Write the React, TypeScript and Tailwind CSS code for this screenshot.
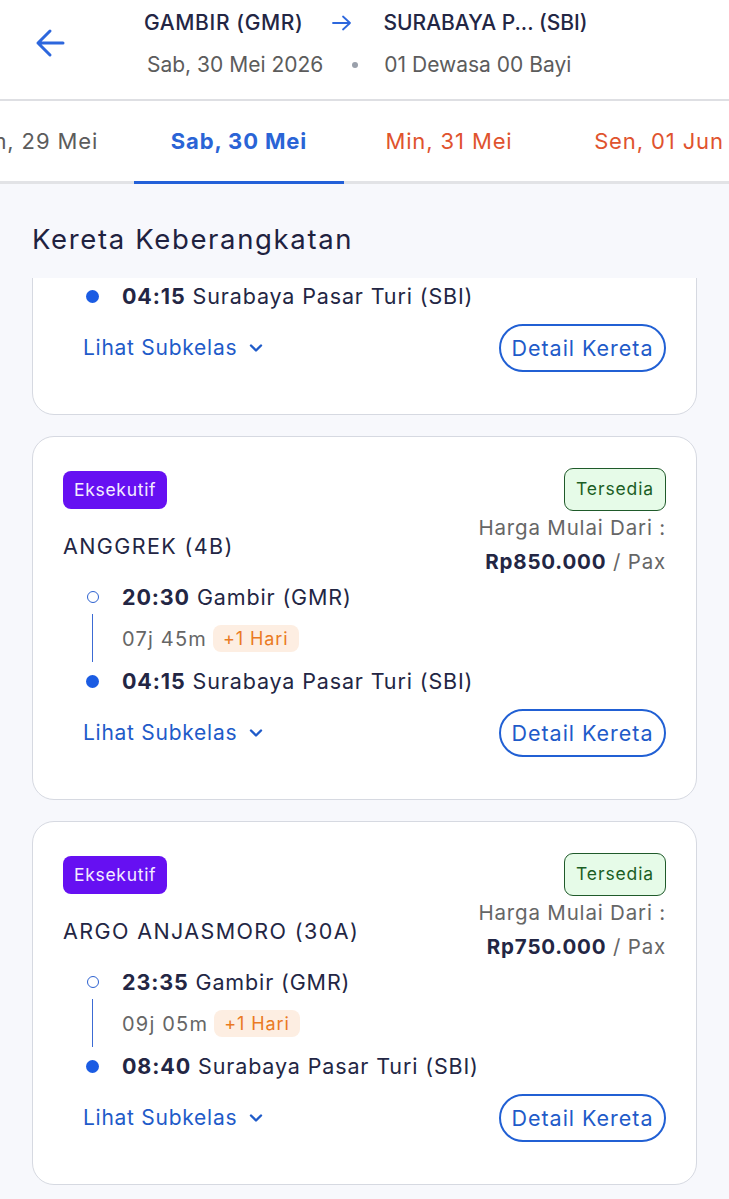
import React from "react";

interface Train {
  id: number;
  name: string;
  price: string;
  depTime: string;
  depStation: string;
  duration: string;
  arrTime: string;
  arrStation: string;
}

const trains: Train[] = [
  {
    id: 1,
    name: "ARGO BROMO ANGGREK (2)",
    price: "Rp900.000",
    depTime: "20:30",
    depStation: "Gambir (GMR)",
    duration: "07j 45m",
    arrTime: "04:15",
    arrStation: "Surabaya Pasar Turi (SBI)",
  },
  {
    id: 2,
    name: "ANGGREK (4B)",
    price: "Rp850.000",
    depTime: "20:30",
    depStation: "Gambir (GMR)",
    duration: "07j 45m",
    arrTime: "04:15",
    arrStation: "Surabaya Pasar Turi (SBI)",
  },
  {
    id: 3,
    name: "ARGO ANJASMORO (30A)",
    price: "Rp750.000",
    depTime: "23:35",
    depStation: "Gambir (GMR)",
    duration: "09j 05m",
    arrTime: "08:40",
    arrStation: "Surabaya Pasar Turi (SBI)",
  },
];

const tabs = [
  { label: "Jum, 29 Mei", tone: "gray" },
  { label: "Sab, 30 Mei", tone: "active" },
  { label: "Min, 31 Mei", tone: "red" },
  { label: "Sen, 01 Jun", tone: "red" },
];

const TrainCard: React.FC<{ train: Train; className?: string }> = ({ train, className }) => {
  return (
    <div
      className={`bg-white border-[1.5px] border-[#d6d9e1] rounded-[22px] pt-[31px] pb-[42px] px-[30px] ${className ?? ""}`}
    >
      <div className="flex justify-between items-start">
        <div className="flex flex-col items-start">
          <span className="mt-[3px] h-[38px] px-[11px] rounded-[8px] bg-[#6610f2] text-[#f4ecff] text-[17.5px] tracking-[0.04em] flex items-center">
            Eksekutif
          </span>
          <span className="mt-[22px] text-[21.5px] leading-[30px] text-[#232644] tracking-[0.065em]">
            {train.name}
          </span>
        </div>
        <div className="flex flex-col items-end">
          <span className="h-[43px] px-[11px] rounded-[9px] border-[1.5px] border-[#1f5a2a] bg-[#e6fbe8] text-[#1b5e24] text-[17.5px] tracking-[0.05em] flex items-center">
            Tersedia
          </span>
          <span className="mt-[2px] text-[20.5px] leading-[30px] text-[#666] tracking-[0.04em]">Harga Mulai Dari :</span>
          <span className="mt-[4px] text-[20.5px] leading-[30px] text-[#666] tracking-[0.04em]">
            <span className="font-bold text-[#232644]">{train.price}</span> / Pax
          </span>
        </div>
      </div>

      <div className="mt-[5px] flex">
        <div className="w-[59px] flex flex-col items-center">
          <div className="h-[30px] flex items-center">
            <div className="w-[12px] h-[12px] rounded-full border-[1.5px] border-[#2d62d0]" />
          </div>
          <div className="mt-[2px] w-[1.5px] h-[48px] bg-[#3c6bd4]" />
          <div className="mt-[4px] h-[30px] flex items-center">
            <div className="w-[13px] h-[13px] rounded-full bg-[#1b5ce3]" />
          </div>
        </div>
        <div className="flex flex-col">
          <div className="h-[30px] flex items-center text-[21.5px] text-[#232644] tracking-[0.04em]">
            <span className="font-bold">{train.depTime}</span>
            <span className="ml-[7px]">{train.depStation}</span>
          </div>
          <div className="mt-[13px] h-[27px] flex items-center">
            <span className="text-[20px] text-[#666] tracking-[0.06em]">{train.duration}</span>
            <span className="ml-[6px] h-[27px] px-[10px] rounded-[8px] bg-[#fdeee2] text-[#ea7a23] text-[18px] tracking-[0.05em] flex items-center">
              +1 Hari
            </span>
          </div>
          <div className="mt-[14px] h-[30px] flex items-center text-[21.5px] text-[#232644] tracking-[0.04em]">
            <span className="font-bold">{train.arrTime}</span>
            <span className="ml-[7px]">{train.arrStation}</span>
          </div>
        </div>
      </div>

      <div className="mt-[13px] flex justify-between items-center">
        <div className="pl-[20px] flex items-center text-[21px] text-[#1f5bc9] tracking-[0.035em]">
          <span>Lihat Subkelas</span>
          <svg className="ml-[12px]" width="14" height="10" viewBox="0 0 14 10" fill="none">
            <path d="M2 2.5 L7 7.5 L12 2.5" stroke="#1f5bc9" strokeWidth="2.4" strokeLinecap="round" strokeLinejoin="round" />
          </svg>
        </div>
        <button className="h-[48px] w-[167px] rounded-full border-2 border-[#2160d4] text-[21.5px] text-[#1f5bc9] tracking-[0.045em] flex items-center justify-center">
          Detail Kereta
        </button>
      </div>
    </div>
  );
};

const App: React.FC = () => {
  return (
    <div className="min-h-[1199px] bg-[#f7f8fc] font-['Inter',sans-serif] overflow-hidden">
      <div className="bg-white h-[101px] border-b-2 border-[#dedfe3] flex items-start">
        <div className="w-[144px] h-[86px] flex items-center pl-[35px]">
          <svg width="30" height="30" viewBox="0 0 30 30" fill="none">
            <path d="M28 15 H3 M15 3 L3 15 L15 27" stroke="#2d67dd" strokeWidth="3" strokeLinecap="round" strokeLinejoin="round" />
          </svg>
        </div>
        <div className="pt-[8px] flex flex-col">
          <div className="h-[30px] flex items-center text-[21px] font-medium text-[#232644]">
            <span className="tracking-[0.03em]">GAMBIR (GMR)</span>
            <svg className="ml-[29px]" width="20" height="16" viewBox="0 0 20 16" fill="none">
              <path d="M1 8 H18 M11 1.5 L18 8 L11 14.5" stroke="#2d67dd" strokeWidth="1.8" strokeLinecap="round" strokeLinejoin="round" />
            </svg>
            <span className="ml-[31px]">SURABAYA P... (SBI)</span>
          </div>
          <div className="mt-[12px] h-[30px] flex items-center text-[21px] text-[#5c5c5c]">
            <span className="ml-[3px]">Sab, 30 Mei 2026</span>
            <span className="ml-[29px] w-[6px] h-[6px] rounded-full bg-[#9aa0ab]" />
            <span className="ml-[26px]">01 Dewasa 00 Bayi</span>
          </div>
        </div>
      </div>

      <div className="bg-white h-[83px] border-b-[3px] border-[#e2e3e6] flex items-stretch">
        {tabs.map((tab, i) => (
          <div
            key={tab.label}
            className={`w-[210px] shrink-0 flex items-center justify-center text-[22px] tracking-[0.04em] ${
              i === 0 ? "-ml-[76px]" : ""
            } ${
              tab.tone === "active"
                ? "font-bold text-[#2a64d6] border-b-[3px] border-[#2360d8] -mb-[3px]"
                : tab.tone === "red"
                ? "text-[#e0532e]"
                : "text-[#5c5c5c]"
            }`}
          >
            {tab.label}
          </div>
        ))}
      </div>

      <div className="pt-[38px] px-[32px] text-[27.5px] leading-[34px] text-[#1f2240] tracking-[0.06em]">
        Kereta Keberangkatan
      </div>

      <div className="mt-[22px] overflow-hidden">
        <div className="px-[32px] flex flex-col gap-[21px]">
          <TrainCard train={trains[0]} className="-mt-[227px]" />
          <TrainCard train={trains[1]} />
          <TrainCard train={trains[2]} />
        </div>
      </div>
    </div>
  );
};

export default App;
